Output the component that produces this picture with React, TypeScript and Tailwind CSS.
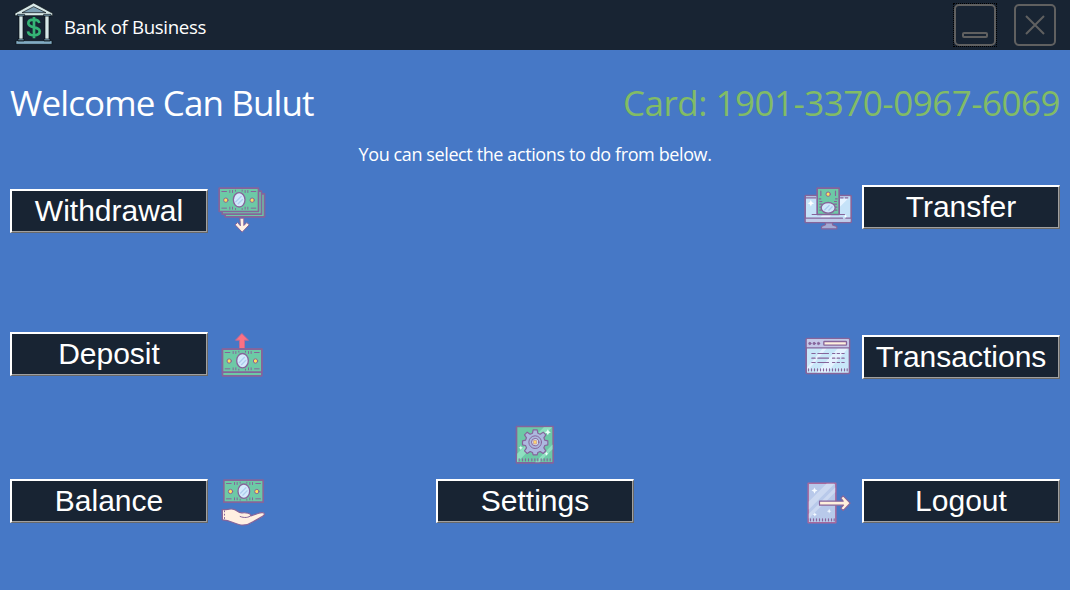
import type { ReactNode } from "react";

const P = "#86649a";
const G = "#6dc9a6";

function Icon({ children }: { children: ReactNode }) {
  return (
    <svg viewBox="0.5 -0.5 192 168" className="block h-14 w-16 shrink-0" fill="none" stroke={P} strokeWidth="5" strokeLinejoin="round" strokeLinecap="round">
      {children}
    </svg>
  );
}

function Note({ x, y, h = 70 }: { x: number; y: number; h?: number }) {
  const m = h / 2;
  return (
    <g transform={`translate(${x} ${y})`}>
      <rect width="118" height={h} fill={G} />
      <path strokeWidth="3" d={`M8 10H22M96 10H110M8 ${h - 10}H22M96 ${h - 10}H110M32 7v6M40 7v6M78 7v6M86 7v6M32 ${h - 13}v6M40 ${h - 13}v6M78 ${h - 13}v6M86 ${h - 13}v6M49 6v3M69 6v3M49 ${h - 9}v3M69 ${h - 9}v3`} />
      <circle cx="20" cy={m + 1} r="6.5" fill="#ffe05c" strokeWidth="3" />
      <circle cx="99" cy={m + 1} r="6.5" fill="#ffe05c" strokeWidth="3" />
      <ellipse cx="60" cy={m} rx="17.5" ry="21.5" fill="#d3eafc" strokeWidth="4" />
      <path stroke="#aecdee" strokeWidth="4" d={`M50 ${m + 6}L66 ${m - 10}M57 ${m + 12}L70 ${m - 1}`} />
    </g>
  );
}

function WithdrawalIcon() {
  return (
    <Icon>
      <rect x="46" y="41" width="118" height="69" fill={G} />
      <rect x="37" y="33" width="118" height="69" fill={G} />
      <Note x={28} y={24} />
      <path d="M91 114h11v22l9-9 7 7-21 22-21-22 7-7 8 9z" fill="#fff0e2" strokeWidth="3" />
    </Icon>
  );
}

function TransferIcon() {
  return (
    <Icon>
      <rect x="28" y="46" width="138" height="81" rx="2" fill="#c5e2f8" />
      <path d="M73 112L130 55h27l-57 57z" fill="#e6f3ff" stroke="none" />
      <path d="M30 114h134v11H30z" fill="#bfcbea" stroke="none" />
      <path strokeWidth="3.5" d="M30 53H60M134 53h8M148 53h8M28 114H140M150 114h16" />
      <path d="M89 128h21v6l13 5v7H77v-7l12-5z" fill="#a3aad4" strokeWidth="3.5" />
      <rect x="64" y="24" width="66" height="79" fill={G} />
      <path strokeWidth="3.5" d="M75 33v13M119 33v13M75 56h-5M78 64h-6M78 72h-6M119 56h5M116 64h6M116 72h6M76 81h-4M119 81h4M76 90h-4M119 90h4M49 103H146" />
      <circle cx="97" cy="42" r="6.5" fill="#ffe05c" strokeWidth="3" />
      <ellipse cx="97" cy="83" rx="21" ry="16" fill="#cfe8fb" strokeWidth="4" />
      <path stroke="#a9c9ec" strokeWidth="4" d="M87 89l13-13M99 90l10-10" />
      <path fill="#fff" stroke="none" d="M45 59l3 7 7 3-7 3-3 7-3-7-7-3 7-3zM145 108l4-4 4 4-4 4z" />
    </Icon>
  );
}

function DepositIcon() {
  return (
    <Icon>
      <path d="M89 62V36H77l19-20 20 20H104v26z" fill="#fb7183" stroke="#c76990" strokeWidth="3" />
      <rect x="38" y="63" width="118" height="80" fill={G} />
      <Note x={38} y={63} h={69} />
    </Icon>
  );
}

function TransactionsIcon() {
  return (
    <Icon>
      <rect x="31" y="31" width="130" height="105" rx="3" fill="#c8e7f9" />
      <path d="M33 33h126v25H33z" fill="#c6c8e8" stroke="none" />
      <path d="M66 128l60-68h30l-61 72H63zM34 118l47-58h12l-59 69z" fill="#e4f2ff" stroke="none" />
      <path strokeWidth="4" d="M32 59H160" />
      <g fill="#86649a" strokeWidth="2.5">
        <circle cx="42" cy="46" r="3.5" />
        <circle cx="55" cy="46" r="3.5" />
        <circle cx="68" cy="46" r="3.5" />
      </g>
      <rect x="84" y="40" width="68" height="11" rx="2" fill="#fff0de" strokeWidth="4" />
      <path strokeWidth="3.5" d="M48 76h10M66 76h32M110 76h7M124 76h7M138 76h7M48 90h10M66 90h32M110 90h7M124 90h7M138 90h7M48 103h10M66 103h32M110 103h7M124 103h7M138 103h7M38 122v6M47 122v6M56 122v6M65 122v6M74 122v6M83 122v6M92 122v6M101 122v6M110 122v6M119 122v6M128 122v6M137 122v6M146 122v6M154 122v6" />
    </Icon>
  );
}

function BalanceIcon() {
  return (
    <Icon>
      <Note x={42} y={18} h={66} />
      <path d="M37 106c13 2 21-3 32-1 12 1 15 12 28 11 12-1 27 1 26 9l21-7c10-4 20-4 20 2-1 7-21 14-33 22-15 10-29 13-44 9-21-5-25-12-49-14z" fill="#fff0e2" strokeWidth="3.5" />
      <path strokeWidth="3" d="M123 124c-6 7-20 8-32 3M37 108v28M44 110v3M44 120v3M44 130v3" />
    </Icon>
  );
}

function LogoutIcon() {
  return (
    <Icon>
      <rect x="37" y="27" width="83" height="119" fill="#b8c9ea" stroke="#a8689c" strokeWidth="4.5" />
      <path d="M39 82L92 29h24L39 106zM39 119l79-79v14l-79 79z" fill="#ccd9f1" stroke="none" />
      <path strokeWidth="3.5" d="M44 134v6M53 134v6M62 134v6M71 134v6M80 134v6M89 134v6M98 134v6M107 134v6M115 134v6" />
      <path fill="#f4faff" stroke="none" d="M56 40l3 6 6 3-6 3-3 7-3-7-6-3 6-3zM100 104l2 5 5 2-5 2-2 5-2-5-5-2 5-2zM57 115l2 4 4 2-4 2-2 4-2-4-4-2 4-2z" />
      <path d="M71 81h71l-7-9 7-7 21 22-21 22-7-7 8-9H71z" fill="#fff0dc" strokeWidth="3.5" />
    </Icon>
  );
}

function SettingsIcon() {
  return (
    <Icon>
      <rect x="38" y="25" width="110" height="109" fill={G} />
      <path d="M40 107l80-80h25l-105 105zM94 132l52-53v14l-39 39z" fill="#8fdfc0" stroke="none" />
      <path strokeWidth="3.5" d="M46 122v6M56 122v6M65 122v6M74 122v6M84 122v6M93 122v6M102 122v6M112 122v6M121 122v6M130 122v6M139 122v6" />
      <path fill="#acb9df" strokeWidth="3.5" d="M88 35h12l2 10 7 3 9-6 8 8-6 9 3 7 9 2v12l-9 2-3 7 6 9-8 8-9-6-7 3-2 7H88l-2-7-7-3-9 6-8-8 6-9-3-7-9-2V68l9-2 3-7-6-9 8-8 9 6 7-3z" />
      <circle cx="94" cy="72" r="19" strokeWidth="3" />
      <circle cx="94" cy="72" r="11" fill="#d3d9ee" strokeWidth="3" />
      <path fill="#ffd36e" stroke="#c99a80" strokeWidth="2" d="M90 67h8v10h-8z" />
      <path fill="#eafff8" stroke="none" d="M132 33l3 6 6 3-6 3-3 6-3-6-6-3 6-3zM51 82l2 5 5 2-5 2-2 5-2-5-5-2 5-2zM128 101l2 4 4 2-4 2-2 4-2-4-4-2 4-2z" />
    </Icon>
  );
}

function BankLogo() {
  return (
    <svg viewBox="42 0 118 144" className="block h-12 w-[39.33px] shrink-0" stroke="#080d12" strokeWidth="2" strokeLinejoin="round">
      <path d="M101 9L45 40v7h113v-7z" fill="#d7e8e8" />
      <path d="M101 20L66 38h72z" fill="#7e9fb3" />
      <path d="M57 47h12v74H57zM135 47h12v74h-12z" fill="#d7e8e8" />
      <path d="M52 43h22v5H52zM131 43h22v5h-22z" fill="#82abc2" />
      <path d="M54 117h18v6H54zM132 117h18v6h-18zM48 122h108v11H48z" fill="#82abc2" />
      <path d="M118 69c-2-7-8-10-17-10-10 0-16 4-16 11 0 17 34 7 34 24 0 8-7 12-17 12s-17-4-18-12M102 51v64" fill="none" stroke="#35b576" strokeWidth="8" />
    </svg>
  );
}

function ActionButton({ children, className = "" }: { children: ReactNode; className?: string }) {
  return (
    <button className={`flex h-11 w-[198px] shrink-0 items-center justify-center border-t-2 border-r border-b border-l-2 border-t-white border-r-[#696969] border-b-[#696969] border-l-white bg-[#182433] pr-px pb-px font-['Liberation_Sans',Arial,sans-serif] text-[30px] leading-none text-white shadow-[inset_-1px_-1px_0_#a0a0a0] ${className}`}>
      {children}
    </button>
  );
}

export default function App() {
  return (
    <div className="flex h-[590px] w-[1070px] flex-col overflow-hidden bg-[#4678c6] font-['Open_Sans','Noto_Sans',sans-serif] text-white">
      <header className="flex h-[50px] shrink-0 items-start bg-[#182433] pl-3.5">
        <BankLogo />
        <h1 className="ml-[10.67px] pt-[13px] text-[18.7px] leading-7 tracking-[-0.37px]">Bank of Business</h1>
        <div className="ml-auto flex gap-4 pt-[3px] pr-[13px]">
          <button aria-label="Minimize" className="h-11 w-11 border border-dotted border-black">
            <svg viewBox="0 0 42 42" className="block size-[42px]" fill="none" stroke="#606060" strokeWidth="2">
              <rect x="1" y="1" width="40" height="40" rx="4" />
              <rect x="9" y="29" width="24" height="4" rx="1" />
            </svg>
          </button>
          <button aria-label="Close" className="h-11 w-11 p-px">
            <svg viewBox="0 0 42 42" className="block size-[42px]" fill="none" stroke="#606060" strokeWidth="2">
              <rect x="1" y="1" width="40" height="40" rx="4" />
              <path d="M12 12L30 30M30 12L12 30" strokeWidth="2" />
            </svg>
          </button>
        </div>
      </header>

      <section className="flex h-[130px] shrink-0 flex-col px-2.5 pt-[29px]">
        <div className="flex h-12 items-center justify-between text-[35px] leading-[48px] whitespace-nowrap">
          <h2 className="tracking-[-0.88px]">Welcome Can Bulut</h2>
          <p className="tracking-[-0.5px] text-[#82bc65]">Card: 1901-3370-0967-6069</p>
        </div>
        <p className="pt-[13px] text-center text-[18px] leading-7 tracking-[-0.39px]">You can select the actions to do from below.</p>
      </section>

      <main className="flex flex-1 justify-between px-2.5">
        <div className="flex flex-col">
          <div className="flex h-[148px] gap-0.5">
            <ActionButton className="mt-[9px]">Withdrawal</ActionButton>
            <WithdrawalIcon />
          </div>
          <div className="flex h-[146px] gap-0.5">
            <ActionButton className="mt-1">Deposit</ActionButton>
            <DepositIcon />
          </div>
          <div className="flex gap-0.5">
            <ActionButton className="mt-[5px]">Balance</ActionButton>
            <BalanceIcon />
          </div>
        </div>
        <div className="flex flex-col items-center pt-[238px]">
          <div className="pl-0.5"><SettingsIcon /></div>
          <ActionButton className="mt-[5px]">Settings</ActionButton>
        </div>
        <div className="flex flex-col">
          <div className="flex h-[148px] gap-0.5">
            <TransferIcon />
            <ActionButton className="mt-[5px]">Transfer</ActionButton>
          </div>
          <div className="flex h-[146px] gap-0.5">
            <TransactionsIcon />
            <ActionButton className="mt-[7px]">Transactions</ActionButton>
          </div>
          <div className="flex gap-0.5">
            <LogoutIcon />
            <ActionButton className="mt-[5px]">Logout</ActionButton>
          </div>
        </div>
      </main>
    </div>
  );
}
